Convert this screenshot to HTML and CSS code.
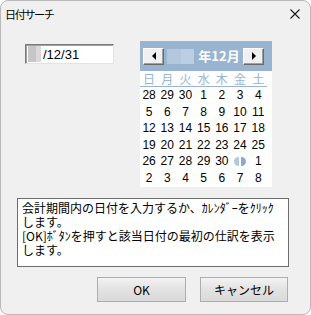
FILE: index.html
```html
<!DOCTYPE html>
<html lang="ja">
<head>
<meta charset="UTF-8">
<title>日付サーチ</title>
<link rel="stylesheet" href="styles.css">
</head>
<body>
<div class="win">
	<div class="titlebar">
		<span class="title">日付サーチ</span>
		<svg class="close" width="10" height="10" viewBox="0 0 10 10"><path d="M0.5 0.5 L9.5 9.5 M9.5 0.5 L0.5 9.5" stroke="#1a1a1a" stroke-width="1.1"/></svg>
	</div>
	<div class="top">
		<div class="dateinput">
			<span class="mask"></span><span class="val">/12/31</span>
		</div>
		<div class="cal">
			<div class="calhead">
				<span class="navbtn"><i class="tri left"></i></span>
				<span class="month"><span class="ymask"></span><b>年12月</b></span>
				<span class="navbtn"><i class="tri right"></i></span>
			</div>
			<div class="week">
				<span>日</span><span>月</span><span>火</span><span>水</span><span>木</span><span>金</span><span>土</span>
			</div>
			<div class="days">
				<span>28</span><span>29</span><span>30</span><span>1</span><span>2</span><span>3</span><span>4</span>
				<span>5</span><span>6</span><span>7</span><span>8</span><span>9</span><span>10</span><span>11</span>
				<span>12</span><span>13</span><span>14</span><span>15</span><span>16</span><span>17</span><span>18</span>
				<span>19</span><span>20</span><span>21</span><span>22</span><span>23</span><span>24</span><span>25</span>
				<span>26</span><span>27</span><span>28</span><span>29</span><span>30</span><span><i class="today"></i></span><span>1</span>
				<span>2</span><span>3</span><span>4</span><span>5</span><span>6</span><span>7</span><span>8</span>
			</div>
		</div>
	</div>
	<div class="msg">会計期間内の日付を入力するか、ｶﾚﾝﾀﾞｰをｸﾘｯｸ<br>します。<br>[OK]ﾎﾞﾀﾝを押すと該当日付の最初の仕訳を表示<br>します。</div>
	<div class="buttons">
		<button class="btn ok">OK</button>
		<button class="btn">キャンセル</button>
	</div>
</div>
</body>
</html>
```

FILE: styles.css
```css
* {margin:0; padding:0; box-sizing:border-box;}
body {background:#ffffff; font-family:"Noto Sans CJK JP", "Liberation Sans", sans-serif; font-size:12px; color:#000;}
.win {width:311px; height:315px; background:#f0f0f0; border:1px solid #b9b9b9; border-radius:8px; overflow:hidden;}
.titlebar {height:29px; display:flex; align-items:center; justify-content:space-between; padding:0 10px 0 4px;}
.title {font-size:11px; letter-spacing:-1.3px; margin-top:-4px;}
.close {margin-top:-4px;}

.top {display:flex; align-items:flex-start; padding-left:24px; margin-top:11px;}
.dateinput {width:89px; height:20px; margin-top:3px; background:#fff; border:1px solid; border-color:#7a7a7a #e3e3e3 #e3e3e3 #7a7a7a; box-shadow:inset 1px 1px 0 #a0a0a0; display:flex; align-items:center; padding-left:2px;}
.mask {width:13px; height:16px; background:linear-gradient(to right, #c6c6c6 60%, #d9d9d9 60%);}
.val {font-family:"Liberation Sans", sans-serif; font-size:13px; margin-left:2px;}

.cal {width:132px; margin-left:26px; background:#fff;}
.calhead {height:30px; background:#99b4d1; display:flex; align-items:center; padding:0 8px 0 3px;}
.navbtn {width:21px; height:17px; background:#f0f0f0; border:1px solid; border-color:#ffffff #6a6a6a #6a6a6a #ffffff; box-shadow:inset -1px -1px 0 #a0a0a0; display:flex; align-items:center; justify-content:center;}
.tri {width:0; height:0; border-top:4px solid transparent; border-bottom:4px solid transparent;}
.tri.left {border-right:4px solid #000;}
.tri.right {border-left:4px solid #000;}
.month {flex:1; display:flex; align-items:center; justify-content:center; gap:4px;}
.ymask {width:27px; height:15px; background:linear-gradient(to right, #b3c7dd 50%, #bccfe2 50%);}
.month b {color:#fff; font-size:13px; font-family:"Noto Sans CJK JP", sans-serif; margin-top:-2px;}

.week {display:grid; grid-template-columns:repeat(7, 18.2px); height:16px; border-bottom:1px solid #99b4d1; margin-right:5px;}
.week span {text-align:center; color:#99b4d1; font-size:12px; line-height:16px;}
.days {display:grid; grid-template-columns:repeat(7, 18.2px); grid-auto-rows:16.5px; padding-bottom:1px;}
.days span {font-family:"Liberation Sans", sans-serif; font-size:12px; display:flex; align-items:center; justify-content:center;}
.today {display:block; width:12px; height:9px; border-radius:5px; background:linear-gradient(to right, #b7c8dc 0 40%, #ffffff 40% 55%, #8fa9c8 55%);}

.msg {width:272px; height:69px; margin:11px 0 0 16px; background:#fff; border:1px solid #6d6d6d; padding:2px 4px; line-height:14px; font-size:12px;}

.buttons {display:flex; justify-content:flex-end; gap:14px; padding-right:22px; margin-top:10px;}
.btn {width:88px; height:25px; font-family:"Noto Sans CJK JP", sans-serif; font-size:12px; border:1px solid #adadad; background:linear-gradient(#f3f3f3, #e2e2e2 50%, #dadada); color:#000;}
.btn.ok {width:89px;}
```
